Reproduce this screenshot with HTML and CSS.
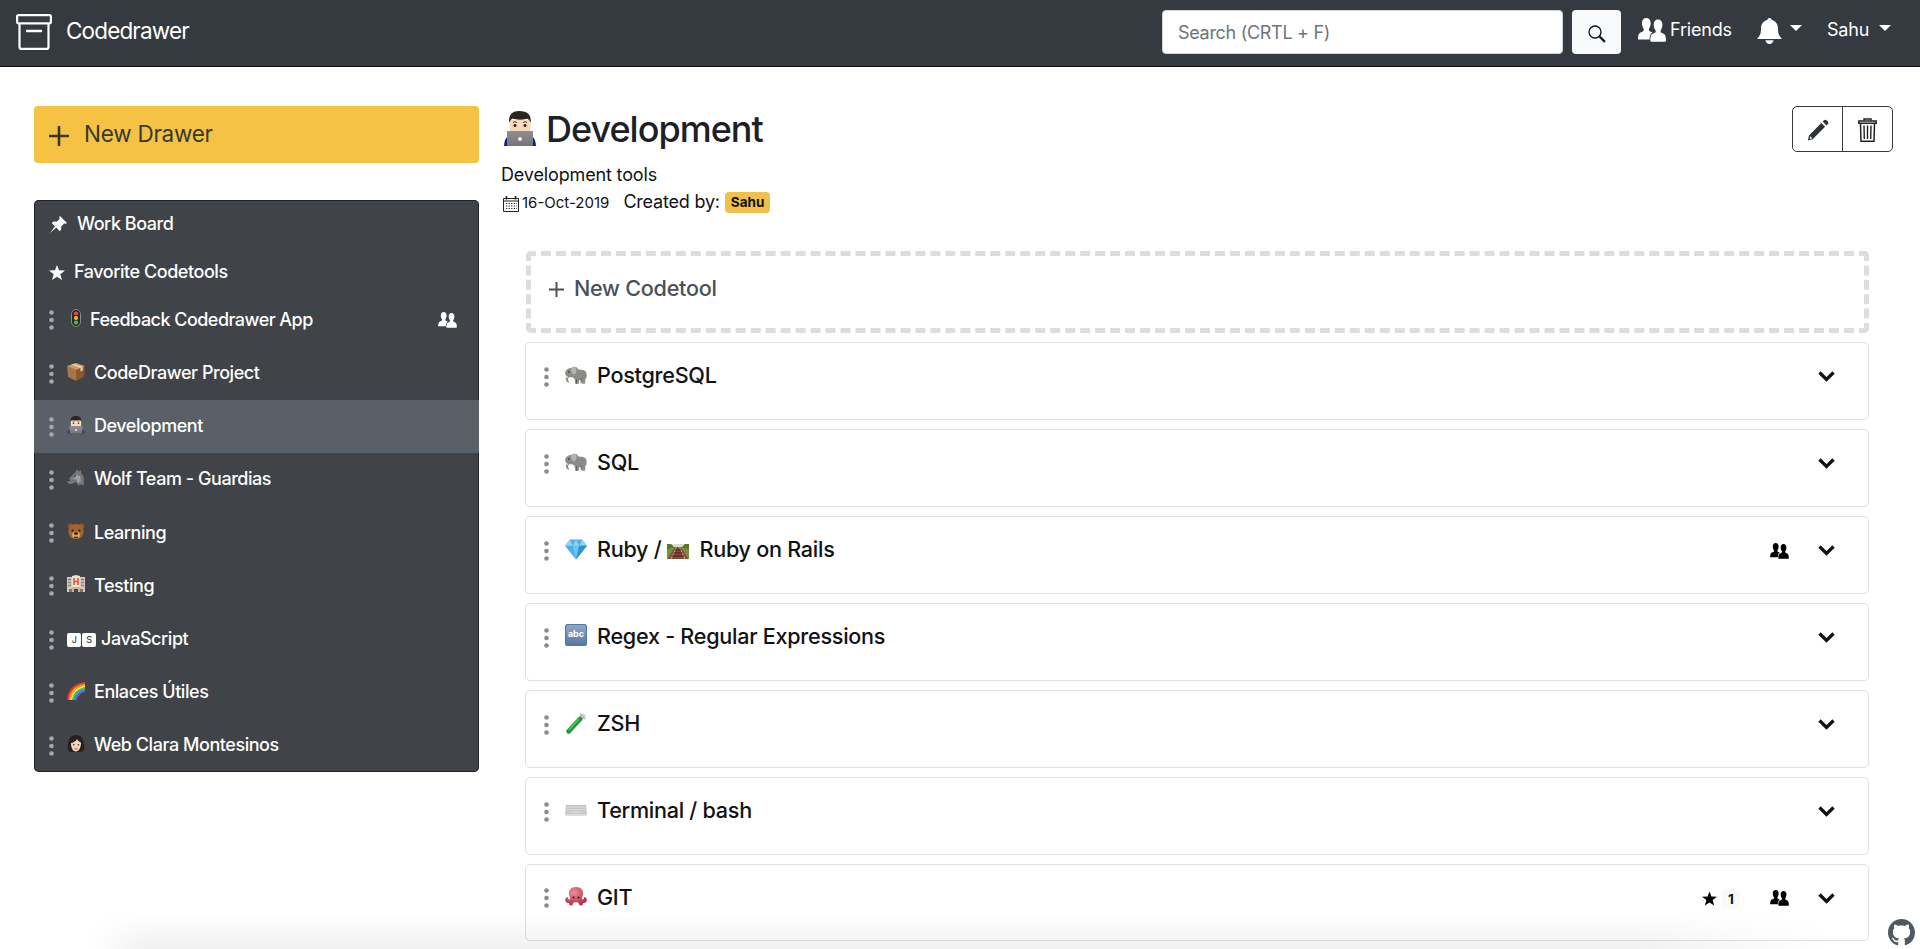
FILE: index.html
```html
<!DOCTYPE html>
<html lang="en">
<head>
<meta charset="utf-8">
<title>Codedrawer</title>
<link rel="stylesheet" href="styles.css">
</head>
<body>
<svg class="defs" aria-hidden="true">
  <linearGradient id="g-laptop" x2="0" y2="1"><stop stop-color="#8f8f91"/><stop offset="1" stop-color="#767678"/></linearGradient>
  <radialGradient id="g-oct" cx=".4" cy=".3" r=".8"><stop stop-color="#f08a92"/><stop offset="1" stop-color="#a82540"/></radialGradient>
  <symbol id="dots" viewBox="0 0 5 20"><circle cx="2.5" cy="2.5" r="2.3"/><circle cx="2.5" cy="10" r="2.3"/><circle cx="2.5" cy="17.5" r="2.3"/></symbol>
  <symbol id="people" viewBox="0 0 28 24"><path d="M8.300 0c2.800 0 4.400 2 4.400 5 0 2.300-.6 4.200-1.600 5.500-.7 2 .2 2.700 2 3.400.6.200 1 .5 1.400.8-2 .9-2.800 2.600-3 6.800H0c0-5 .8-6.500 3.500-7.500 2.200-.8 2.700-1.500 2-3.500C4.500 9.200 3.900 7.300 3.900 5c0-3 1.600-5 4.400-5z"/><path d="M20 1.500c2.800 0 4.400 2 4.400 5 0 2.300-.6 4.200-1.600 5.500-.7 2-.1 2.600 1.800 3.300 2.700 1 3.400 2.600 3.400 7.200 0 .9-.6 1.300-1.400 1.300H13.700c-.9 0-1.400-.5-1.400-1.300 0-4.600.8-6.200 3.500-7.200 1.900-.7 2.400-1.300 1.600-3.300-1-1.300-1.700-3.200-1.700-5.500 0-3 1.500-5 4.300-5z"/></symbol>
  <symbol id="star" viewBox="0 0 16 15"><path d="M8 0l2 5.300 6 .2-4.700 3.700L13 15 8 11.700 3 15l1.700-5.800L0 5.500l6-.2z"/></symbol>
  <symbol id="chev" viewBox="0 0 17 11"><path d="M1.500 1.500l7 7 7-7" fill="none" stroke="currentColor" stroke-width="3.300"/></symbol>
  <symbol id="plus" viewBox="0 0 20 20"><path d="M8.700 0h2.600v8.700H20v2.600h-8.700V20H8.700v-8.700H0V8.700h8.700z"/></symbol>
  <symbol id="dev" viewBox="0 0 32 36"><path d="M0 35c.5-6 2-9.500 7-11h18c5 1.500 6.500 5 7 11z" fill="#1b189d"/><path d="M5.600 9h20.800v8c0 6-4 8.500-10.400 8.500S5.600 23 5.600 17z" fill="#f6d9bf"/><path d="M5.300 12C4.300 4 8 0 15 0c8.500 0 12.500 3.500 11.700 12-1-3-2.200-4-3.200-4.300C17 9.300 12 8.800 8.500 7.500 6.500 9 5.800 10 5.300 12z" fill="#2d2421"/><path d="M9 11.500q2-1.500 4 0m6 0q2-1.500 4 0" stroke="#4b342b" fill="none"/><circle cx="11" cy="14.500" r="1.500" fill="#2c201c"/><circle cx="21" cy="14.500" r="1.500" fill="#2c201c"/><rect x="3" y="20" width="26" height="15" rx="1" fill="url(#g-laptop)"/><circle cx="16" cy="28" r="2" fill="#eee"/></symbol>
  <symbol id="light" viewBox="0 0 10 18"><rect x=".5" y=".5" width="9" height="17" rx="4.500" fill="#2c2a2a" stroke="#8b8785"/><circle cx="5" cy="4.500" r="2.100" fill="#ee4638"/><circle cx="5" cy="9" r="2.100" fill="#f4b82f"/><circle cx="5" cy="13.500" r="2.100" fill="#35c845"/></symbol>
  <symbol id="box" viewBox="0 0 18 18"><path d="M0 3l9 4v11L1 13.700z" fill="#a87445"/><path d="M18 3L9 7v11l8-4.300z" fill="#8b582f"/><path d="M0 3l9-3 9 3-9 4z" fill="#cf9c67"/><path d="M4.500 1.500l9 3.600v3.400l2.200-1V4L7 .7z" fill="#ecd2ae"/></symbol>
  <symbol id="wolf" viewBox="0 0 18 18"><path d="M0 12l5-5.500L8.500 3 10 0l1.500 2.500L14 1l.3 3.500C17 7 17.500 10 16.500 17l-3-2-2 2-2.500-4-4 2-3.500-.3z" fill="#777779"/><path d="M9 6l4 1 1 5-3 2-2-4-3 .5z" fill="#a0a0a2"/><path d="M0 12l2-2 1 1.500z" fill="#222"/><circle cx="8" cy="7" r=".8" fill="#222"/></symbol>
  <symbol id="bear" viewBox="0 0 18 18"><circle cx="3.300" cy="4" r="2.800" fill="#8e5427"/><circle cx="14.700" cy="4" r="2.800" fill="#8e5427"/><path d="M9 2c5 0 7 3 7.500 7 .5 5-3 8-7.500 8s-8-3-7.500-8C2 5 4 2 9 2z" fill="#a0652f"/><ellipse cx="9" cy="13" rx="4" ry="3.300" fill="#d6a466"/><ellipse cx="9" cy="11.500" rx="2" ry="1.300" fill="#25180f"/><circle cx="5.500" cy="8.500" r="1" fill="#25180f"/><circle cx="12.500" cy="8.500" r="1" fill="#25180f"/><path d="M7 15q2 1 4 0" stroke="#25180f" fill="none"/></symbol>
  <symbol id="hosp" viewBox="0 0 18 18"><path d="M0 2h5v15H0zm13 0h5v15h-5z" fill="#d8c9b8"/><path d="M5 1l4-1 4 1v12H5z" fill="#efe2d4"/><path d="M5 12h8v5h-2v-3H7v3H5z" fill="#c9b49d"/><path d="M1 4.500h3m-3 3h3m-3 3h3m10-6h3m-3 3h3m-3 3h3" stroke="#788894" stroke-width="1.300"/><path d="M7 3v7m4-7v7M7 6.500h4" stroke="#e75b37" stroke-width="1.700"/><path d="M2 14h3v3H2zm11 0h3v3h-3z" fill="#8e7254"/></symbol>
  <symbol id="rain" viewBox="0 0 18 18"><g fill="none" stroke-width="1.900"><path d="M1 18C2 8 8 2 18 1" stroke="#f1382d"/><path d="M2.700 18C4 9 9 4 18 2.700" stroke="#ff9a22"/><path d="M4.300 18C5.500 10.500 10 6 18 4.300" stroke="#ffe83c"/><path d="M6 18c1-6 5.500-10.500 12-12" stroke="#48c94f"/><path d="M7.500 18C8.500 13 12 9 18 7.500" stroke="#3694e8"/><path d="M9 18c1-4 4-7.500 9-9" stroke="#7958bd" stroke-width="1.200"/></g></symbol>
  <symbol id="woman" viewBox="0 0 18 18"><path d="M1 15C0 8 2 0 9 0c6 0 9 6 8 15-2 2-4 2-4 2H4s-2 0-3-2z" fill="#25211f"/><path d="M4 8c3-.5 5-2 6-4 1 2 2.500 3 4 3.500 0 5-2 9-5 9s-5-3.500-5-8.500z" fill="#f5d4b8"/><circle cx="6.800" cy="9.800" r=".8" fill="#35241d"/><circle cx="11.400" cy="9.800" r=".8" fill="#35241d"/><path d="M7.300 13.500q1.700 1 3.400 0" stroke="#c3554d" fill="none"/></symbol>
  <symbol id="eleph" viewBox="0 0 20 17"><path d="M6 1.500C9-.5 11.500 1 12 3c1.500.2 3 0 4.500.5C19 4.300 19.800 6 19.700 9l-.5 3-.6-1.500-.4 5.500h-3l-.4-3.500-2 .3-.3 3.200H9.300l-.6-4.500-2-1.500C4 10 3 10 2.700 12c0 1.500 1 2 1 3C1 15 .5 12 1 9L0 6c.5-2 2.500-4 4-4z" fill="#8b8b87"/><path d="M5.500 2.200C8 .2 9.500 0 10 1.500c1 3 .3 5-2 6.500L5.500 5z" fill="#b5b4af"/><path d="M.3 7.200c.5 1.600 1.500 2.300 3 2.700L1.500 11z" fill="#ecebe5"/><circle cx="3.500" cy="5.300" r=".7" fill="#222"/><path d="M10.500 12v4m4.200-5v4" stroke="#5f5f5c"/></symbol>
  <symbol id="gem" viewBox="0 0 20 18"><path d="M4.500 0h11L20 5.500 10 18 0 5.500z" fill="#4cafe9"/><path d="M4.500 0L7 5.500 10 0l3 5.500L15.500 0 20 5.500H0z" fill="#8ed4f7"/><path d="M7 5.500h6L10 18z" fill="#72c5f3"/><path d="M13 5.500h7L10 18z" fill="#2e91d5"/></symbol>
  <symbol id="rail" viewBox="0 0 22 15"><path d="M0 0h22v15H0z" fill="#56752e"/><path d="M4 0h14l-3 3H7z" fill="#dcdccb"/><path d="M0 5l8-2-7 12H0zm22 0l-8-2 7 12h1z" fill="#778e3b"/><path d="M8.500 3h5L21.500 15H.5z" fill="#8a4a38"/><path d="M9.500 3L4 15M12.500 3L18 15" stroke="#d5b9a6" stroke-width=".8"/><path d="M8 6h6M6.500 9h9M5 12h12" stroke="#40201a"/></symbol>
  <symbol id="tube" viewBox="0 0 20 21"><path d="M2.500 18.500L17 3" stroke="#cfd8d1" stroke-width="5" stroke-linecap="round"/><path d="M2.700 18.300L14 6" stroke="#169b31" stroke-width="4.500" stroke-linecap="round"/><path d="M3 17L13 6" stroke="#53cd57" stroke-width="1.300"/><path d="M14 1l5 5" stroke="#b9bebb" stroke-width="2"/></symbol>
  <symbol id="keys" viewBox="0 0 22 11"><path d="M1 0h20l1 10H0z" fill="#c4c4c7"/><path d="M0 9h22v2H0z" fill="#dededf"/><path d="M2 2h18M2 4.500h18M2 7h3m12 0h3" stroke="#e6e6e6" stroke-width="1.100" stroke-dasharray="1.600 .5"/><path d="M6 7h10" stroke="#e6e6e6" stroke-width="1.100"/></symbol>
  <symbol id="octo" viewBox="0 0 22 19"><path d="M11 0c5 0 7.500 3.500 7 7-.3 2.500-1.200 3.500-1 5 1.500 1 2.500 0 2-2 2 0 3 1.500 2.800 3.500-.5 2-2 2.500-4 2.500.5 1.500-.5 2.500-2 2.500-1.300 0-2-1-2-2.500L11 15l-2.800 1c0 1.500-.7 2.500-2 2.500-1.500 0-2.500-1-2-2.500-2 0-3.500-.5-4-2.500C0 11.500 1 10 3 10c-.5 2 .5 3 2 2 .2-1.500-.7-2.500-1-5-.5-3.500 2-7 7-7z" fill="url(#g-oct)"/><circle cx="8.500" cy="10.500" r="1.100" fill="#401018"/><circle cx="13.500" cy="10.500" r="1.100" fill="#401018"/></symbol>
</svg>

<header class="topbar">
  <a class="brand">
    <svg class="brand-icon" viewBox="0 0 36 36" fill="none" stroke="#fff" stroke-width="2.200"><rect x="1.100" y="1.100" width="33.800" height="8.200" rx="1.500"/><path d="M3.500 9.500v23.400q0 2 2 2h25q2 0 2-2V9.500"/><path d="M11 17h14" stroke-width="2.400" stroke-linecap="round"/></svg>
    <span class="brand-name">Codedrawer</span>
  </a>
  <div class="search"><span class="search-hint">Search (CRTL + F)</span></div>
  <div class="search-btn"><svg width="18" height="18" viewBox="0 0 18 18" fill="none" stroke="#111"><circle cx="7" cy="7" r="6" stroke-width="1.300"/><path d="M11.300 11.300l5.600 5.600" stroke-width="2.200"/></svg></div>
  <a class="friends"><svg width="28" height="24" fill="#fff"><use href="#people"/></svg><span class="friends-label">Friends</span></a>
  <a class="bell"><svg width="25" height="26" viewBox="0 0 25 26" fill="#fff"><path d="M12.500 0c1.300 0 2 .9 2.200 2C19 3 21 6.500 21 10.500c0 5.500 1 7 4 10.500H0c3-3.500 4-5 4-10.500C4 6.500 6 3 10.300 2c.2-1.100.9-2 2.200-2zM8.500 22.300h8c0 2-1.700 3.700-4 3.700s-4-1.700-4-3.700z"/></svg><i class="caret"></i></a>
  <a class="user"><span class="user-name">Sahu</span><i class="caret"></i></a>
</header>

<div class="page">
  <aside class="side">
    <a class="new-drawer"><svg width="20" height="20"><use href="#plus"/></svg><span class="new-drawer-label">New Drawer</span></a>
    <nav class="drawers">
      <a class="pin"><svg width="17" height="17" viewBox="0 0 17 17"><path d="M10 0l7 7-1.500.8-1.300-.3-3 3c.4 2.300-.2 3.700-1.400 4.700L6.300 11.500 0 17l5-6.800L1.700 7C3 5.600 4.800 5.200 6.700 5.800l3-3L9.200 1z"/></svg><span>Work Board</span></a>
      <a class="pin fav"><svg width="16" height="15"><use href="#star"/></svg><span>Favorite Codetools</span></a>
      <a class="drawer first"><svg class="grip"><use href="#dots"/></svg><svg class="emo light"><use href="#light"/></svg><span>Feedback Codedrawer App</span><svg class="shared" width="19" height="16"><use href="#people"/></svg></a>
      <a class="drawer"><svg class="grip"><use href="#dots"/></svg><svg class="emo"><use href="#box"/></svg><span>CodeDrawer Project</span></a>
      <a class="drawer active"><svg class="grip"><use href="#dots"/></svg><svg class="emo"><use href="#dev"/></svg><span>Development</span></a>
      <a class="drawer"><svg class="grip"><use href="#dots"/></svg><svg class="emo"><use href="#wolf"/></svg><span>Wolf Team - Guardias</span></a>
      <a class="drawer"><svg class="grip"><use href="#dots"/></svg><svg class="emo"><use href="#bear"/></svg><span>Learning</span></a>
      <a class="drawer"><svg class="grip"><use href="#dots"/></svg><svg class="emo"><use href="#hosp"/></svg><span>Testing</span></a>
      <a class="drawer js"><svg class="grip"><use href="#dots"/></svg><b class="key">J</b><b class="key">S</b><span>JavaScript</span></a>
      <a class="drawer"><svg class="grip"><use href="#dots"/></svg><svg class="emo"><use href="#rain"/></svg><span>Enlaces Útiles</span></a>
      <a class="drawer"><svg class="grip"><use href="#dots"/></svg><svg class="emo"><use href="#woman"/></svg><span>Web Clara Montesinos</span></a>
    </nav>
  </aside>

  <main class="main">
    <div class="head">
      <div class="info">
        <h1 class="title"><svg width="32" height="36"><use href="#dev"/></svg><span>Development</span></h1>
        <p class="desc"><span>Development tools</span></p>
        <div class="meta">
          <svg class="cal" width="16" height="16" viewBox="0 0 16 16" fill="none" stroke="#222"><path d="M.5 2.500h15v13H.5zM.5 5h15"/><path d="M3.500 0v3.500m9-3.500v3.500" stroke-width="1.600"/><path d="M3 7.500h11M3 10h11M3 12.500h11" stroke-width="1.100" stroke-dasharray="1.200 1.400"/></svg>
          <span class="date">16-Oct-2019</span><span class="by">Created by:</span><span class="badge">Sahu</span>
        </div>
      </div>
      <div class="actions">
        <a class="act"><svg width="22" height="22" viewBox="0 0 22 22"><path fill="#2d3339" d="M17 1.300q1.300-1.300 2.600 0l1.200 1.200q1.300 1.300 0 2.600l-1.300 1.300-3.800-3.800z"/><path fill="#2d3339" fill-rule="evenodd" d="M14.300 4l3.800 3.800L5.600 20.300.8 21.500 2 16.500zM3.400 17.200l-.9 2.700 2.800-.7z"/></svg></a>
        <a class="act"><svg width="19" height="24" viewBox="0 0 19 24" fill="none" stroke="#222"><path d="M.8 3h17.400v2.300H.8z" stroke-width="1.400"/><path d="M6 2.500V1h7v1.500" stroke-width="1.500"/><path d="M2.500 5.500l.5 17.700h13l.5-17.700" stroke-width="1.500"/><path d="M6 7.500l.3 13.500M9.500 7.500V21m3.500-13.500L12.700 21" stroke-width="1.400"/></svg></a>
      </div>
    </div>
    <div class="tools">
      <a class="new-tool"><svg width="15" height="15"><use href="#plus"/></svg><span>New Codetool</span></a>
      <section class="tool"><svg class="grip"><use href="#dots"/></svg><svg class="icon"><use href="#eleph"/></svg><span>PostgreSQL</span><div class="right"><svg class="chev"><use href="#chev"/></svg></div></section>
      <section class="tool"><svg class="grip"><use href="#dots"/></svg><svg class="icon"><use href="#eleph"/></svg><span>SQL</span><div class="right"><svg class="chev"><use href="#chev"/></svg></div></section>
      <section class="tool"><svg class="grip"><use href="#dots"/></svg><svg class="icon"><use href="#gem"/></svg><span>Ruby /</span><svg class="rail"><use href="#rail"/></svg><span>Ruby on Rails</span><div class="right"><svg class="group"><use href="#people"/></svg><svg class="chev"><use href="#chev"/></svg></div></section>
      <section class="tool"><svg class="grip"><use href="#dots"/></svg><b class="abc">abc</b><span>Regex - Regular Expressions</span><div class="right"><svg class="chev"><use href="#chev"/></svg></div></section>
      <section class="tool"><svg class="grip"><use href="#dots"/></svg><svg class="icon"><use href="#tube"/></svg><span>ZSH</span><div class="right"><svg class="chev"><use href="#chev"/></svg></div></section>
      <section class="tool"><svg class="grip"><use href="#dots"/></svg><svg class="icon"><use href="#keys"/></svg><span>Terminal / bash</span><div class="right"><svg class="chev"><use href="#chev"/></svg></div></section>
      <section class="tool"><svg class="grip"><use href="#dots"/></svg><svg class="icon"><use href="#octo"/></svg><span>GIT</span><div class="right"><svg width="15" height="15"><use href="#star"/></svg><b class="count">1</b><svg class="group"><use href="#people"/></svg><svg class="chev"><use href="#chev"/></svg></div></section>
    </div>
  </main>
</div>
<div class="shade"></div>
<a class="github"><svg width="27" height="27" viewBox="0 0 16 16" fill="#515960"><path d="M8 0C3.580 0 0 3.580 0 8c0 3.540 2.290 6.530 5.470 7.590.4.070.55-.17.55-.38 0-.19-.01-.82-.01-1.490-2.010.37-2.530-.49-2.690-.94-.09-.23-.48-.94-.82-1.130-.28-.15-.68-.52-.01-.53.63-.01 1.080.58 1.230.82.72 1.210 1.870.87 2.330.66.070-.52.280-.87.510-1.070-1.780-.2-3.640-.89-3.640-3.950 0-.87.310-1.590.82-2.150-.08-.2-.36-1.020.08-2.120 0 0 .67-.21 2.200.82.640-.18 1.320-.27 2-.27s1.360.09 2 .27c1.530-1.040 2.200-.82 2.200-.82.440 1.100.16 1.920.08 2.120.51.560.82 1.270.82 2.150 0 3.070-1.870 3.750-3.650 3.950.29.250.54.730.54 1.480 0 1.070-.01 1.930-.01 2.200 0 .21.150.46.550.38A8.010 8.010 0 0 0 16 8c0-4.420-3.580-8-8-8z"/></svg></a>
</body>
</html>
```
FILE: styles.css
```css
* { box-sizing: border-box; }
html, body { height: 100%; }
body {
  position: relative;
  margin: 0;
  overflow: hidden;
  background: #fff;
  color: #111214;
  font-family: Inter, "Liberation Sans", sans-serif;
  font-size: 18px;
}
svg { display: block; flex: none; }
span { white-space: nowrap; }
.defs { position: absolute; width: 0; height: 0; }

/* Top bar */
.topbar {
  display: flex;
  align-items: flex-start;
  height: 67px;
  padding: 10px 29px 0 16px;
  background: #343a40;
  border-bottom: 1px solid #0c0e10;
  color: #fff;
}
.brand { display: flex; flex: 1; gap: 14px; padding-top: 4px; }
.brand-icon { width: 36px; height: 36px; }
.brand-name { font-size: 22.5px; letter-spacing: -.85px; line-height: 33px; }
.search {
  width: 401px;
  height: 44px;
  padding: 0 15px;
  background: #fff;
  border: 1px solid #ced4da;
  border-radius: 4px;
}
.search-hint { color: #6c757d; font-size: 18px; letter-spacing: -.3px; line-height: 44px; }
.search-btn {
  display: grid;
  place-items: center;
  width: 49px;
  height: 44px;
  margin-left: 9px;
  padding-top: 3px;
  background: #f8f9fa;
  border-radius: 4px;
}
.friends { display: flex; gap: 4px; width: 119px; margin-left: 17px; padding-top: 8px; }
.friends-label, .user-name { font-size: 18px; letter-spacing: -.2px; line-height: 23px; }
.bell { display: flex; gap: 8px; width: 70px; padding-top: 8px; }
.user { display: flex; width: 64px; justify-content: space-between; padding-top: 8px; }
.caret {
  width: 12px;
  height: 6px;
  margin-top: 7px;
  border: 6px solid transparent;
  border-top-color: #fff;
  border-bottom: 0;
}

.page { display: flex; padding: 39px 28px 0 34px; }

/* Sidebar */
.side { width: 445px; flex: none; }
.new-drawer {
  display: flex;
  align-items: center;
  gap: 15px;
  height: 57px;
  margin-bottom: 37px;
  padding-left: 15px;
  background: #f6c244;
  border-radius: 4px;
  color: #343a30;
  fill: #343a30;
}
.new-drawer svg { margin-top: 3px; }
.new-drawer-label { margin-top: -2px; font-size: 22.5px; letter-spacing: -.25px; }
.drawers {
  height: 572px;
  overflow: hidden;
  background: #404348;
  border-radius: 5px;
  box-shadow: inset 0 0 0 1px #202326;
  color: #fff;
  fill: #fff;
  font-weight: 500;
  letter-spacing: -.45px;
}
.drawers span { margin-top: -2px; }
.pin { display: flex; align-items: center; gap: 10px; height: 48px; padding-left: 16px; }
.pin svg { margin-top: 1px; }
.fav { gap: 9px; padding-left: 15px; }
.drawer { display: flex; align-items: center; height: 53.200px; padding: 0 22px 0 15px; }
.first { height: 51px; padding-bottom: 3px; letter-spacing: -.53px; }
.active { background: #5a6068; }
.grip { width: 5px; height: 20px; fill: #a5a7aa; }
.emo { width: 18px; height: 18px; margin: -4px 9px 0 13px; }
.light { width: 10px; margin: -4px 9px 0 17px; }
.shared { margin-left: auto; }
.key {
  display: grid;
  place-items: center;
  width: 14px;
  height: 14px;
  margin-right: 1px;
  background: #fff;
  border-radius: 2px;
  color: #404348;
  font-size: 9px;
  font-weight: 500;
}
.js .grip { margin-right: 13px; }
.js span { margin-left: 4px; }

/* Drawer header */
.main { flex: 1; padding-left: 22px; }
.head { display: flex; justify-content: space-between; height: 145px; }
.title {
  display: flex;
  align-items: center;
  gap: 10px;
  height: 46px;
  margin: 0;
  padding-left: 3px;
  color: #1d2024;
  font-size: 36px;
  font-weight: 500;
  letter-spacing: -1px;
}
.desc { margin: 10px 0 0; font-size: 18px; letter-spacing: -.15px; line-height: 25px; }
.meta { display: flex; align-items: center; height: 28px; padding-left: 2px; }
.cal { margin: 5px 3px 0 0; }
.date { margin-top: 2px; font-size: 15px; }
.by { margin-left: 14px; letter-spacing: -.2px; }
.badge {
  height: 21px;
  margin: 2px 0 0 5px;
  padding: 0 6px;
  background: #f0c04b;
  border-radius: 4px;
  font-size: 13.500px;
  font-weight: 700;
  line-height: 21px;
}
.actions {
  display: flex;
  width: 101px;
  height: 46px;
  margin-right: -1px;
  border: 1px solid #343a40;
  border-radius: 5px;
}
.act { display: grid; flex: 1; place-items: center; padding-top: 1px; }
.act + .act { border-left: 1px solid #343a40; }

/* Tool list */
.tools {
  display: flex;
  flex-direction: column;
  gap: 9px;
  padding: 0 23px 0 24px;
}
.new-tool, .tool {
  display: flex;
  align-items: center;
  font-size: 21.600px;
  font-weight: 500;
  letter-spacing: -.27px;
}
.new-tool {
  gap: 10px;
  height: 82px;
  margin-left: 1px;
  padding: 0 0 9px 18px;
  border: 5px dashed #ddd;
  border-radius: 5px;
  color: #495057;
  fill: #495057;
}
.new-tool svg { margin-top: 4px; }
.tool {
  height: 78px;
  padding: 0 33px 9px 18px;
  background: #fff;
  border: 1.500px solid #dfdfdf;
  border-radius: 5px;
}
.tool:last-child { height: 77px; }
.tool span { margin-top: -3px; }
.tool .grip { fill: #8b8b8b; }
.icon { width: 22px; height: 21px; margin: -3px 10px 0 16px; }
.rail { width: 22px; height: 15px; margin: 1px 10px 0 6px; }
.abc {
  width: 22px;
  height: 22px;
  margin: -5px 10px 0 16px;
  background: linear-gradient(#8fabcb, #52779f);
  border-radius: 3px;
  box-shadow: inset 0 0 0 1px #56779b;
  color: #fff;
  font-size: 9px;
  font-weight: 700;
  letter-spacing: 0;
  line-height: 20px;
  text-align: center;
}
.right { display: flex; align-items: center; margin-left: auto; }
.group { width: 19px; height: 16px; }
.chev { width: 17px; height: 11px; margin-left: 29px; }
.count {
  width: 18px;
  height: 20px;
  margin: 2px 30px 0 5px;
  background: #f8f9fa;
  border-radius: 4px;
  font-size: 13.500px;
  font-weight: 700;
  letter-spacing: 0;
  line-height: 20px;
  text-align: center;
}

/* Overlays at the bottom edge */
.shade {
  position: absolute;
  left: 90px;
  right: 90px;
  bottom: 0;
  height: 36px;
  background: linear-gradient(transparent, rgba(0, 0, 0, .06));
  mask-image: linear-gradient(90deg, transparent, #000 60px, #000 calc(100% - 200px), transparent);
}
.github { position: absolute; right: 5px; bottom: 3px; }
```
